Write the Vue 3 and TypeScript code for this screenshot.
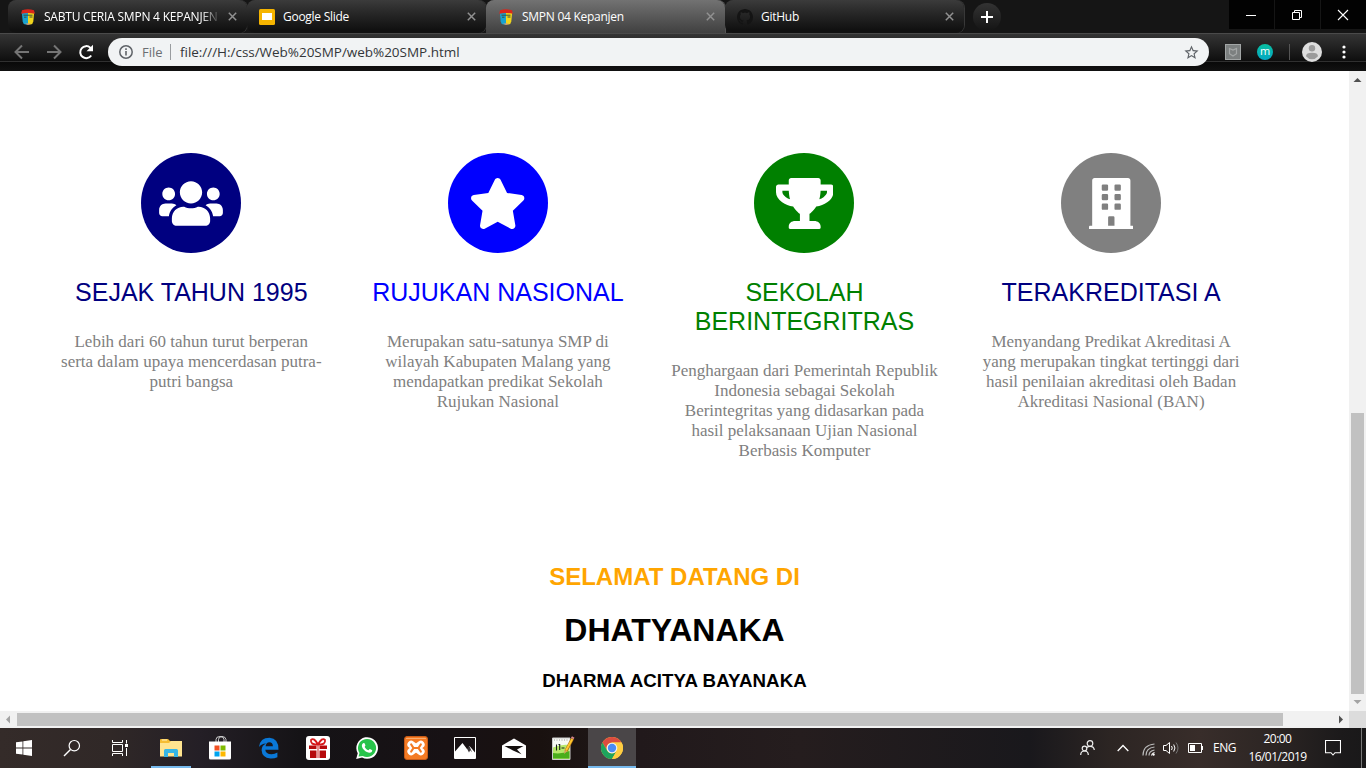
<script setup lang="ts">
interface Tab {
  title: string
  icon: 'school' | 'slides' | 'github'
  active?: boolean
  fade?: boolean
}

interface Feature {
  key: string
  title: string[]
  lines: string[]
  viewBox: string
  width: number
  path: string
}

const tabs: Tab[] = [
  { title: 'SABTU CERIA SMPN 4 KEPANJEN', icon: 'school', fade: true },
  { title: 'Google Slide', icon: 'slides' },
  { title: 'SMPN 04 Kepanjen', icon: 'school', active: true },
  { title: 'GitHub', icon: 'github' },
]

const features: Feature[] = [
  {
    key: 'navy',
    title: ['SEJAK TAHUN 1995'],
    lines: ['Lebih dari 60 tahun turut berperan', 'serta dalam upaya mencerdasan putra-', 'putri bangsa'],
    viewBox: '0 0 640 512',
    width: 64,
    path: 'M96 224c35.3 0 64-28.7 64-64s-28.7-64-64-64-64 28.7-64 64 28.7 64 64 64zm448 0c35.3 0 64-28.7 64-64s-28.7-64-64-64-64 28.7-64 64 28.7 64 64 64zm32 32h-64c-17.6 0-33.5 7.1-45.1 18.6 40.3 22.1 68.9 62 75.1 109.4h66c17.7 0 32-14.3 32-32v-32c0-35.3-28.7-64-64-64zm-256 0c61.9 0 112-50.1 112-112S381.9 32 320 32 208 82.1 208 144s50.1 112 112 112zm76.8 32h-8.3c-20.8 10-43.9 16-68.5 16s-47.6-6-68.5-16h-8.3C179.6 288 128 339.6 128 403.2V432c0 26.5 21.5 48 48 48h288c26.5 0 48-21.5 48-48v-28.8c0-63.6-51.6-115.2-115.2-115.2zm-223.7-13.4C161.5 263.1 145.6 256 128 256H64c-35.3 0-64 28.7-64 64v32c0 17.7 14.3 32 32 32h65.9c6.3-47.4 34.9-87.3 75.2-109.4z',
  },
  {
    key: 'blue',
    title: ['RUJUKAN NASIONAL'],
    lines: ['Merupakan satu-satunya SMP di', 'wilayah Kabupaten Malang yang', 'mendapatkan predikat Sekolah', 'Rujukan Nasional'],
    viewBox: '0 0 576 512',
    width: 57.4,
    path: 'M259.3 17.8L194 150.2 47.9 171.5c-26.2 3.8-36.7 36.1-17.7 54.6l105.7 103-25 145.5c-4.5 26.3 23.2 46 46.4 33.7L288 439.6l130.7 68.7c23.2 12.2 50.9-7.4 46.4-33.7l-25-145.5 105.7-103c19-18.5 8.5-50.8-17.7-54.6L382 150.2 316.7 17.8c-11.7-23.6-45.6-23.9-57.4 0z',
  },
  {
    key: 'green',
    title: ['SEKOLAH', 'BERINTEGRITRAS'],
    lines: ['Penghargaan dari Pemerintah Republik', 'Indonesia sebagai Sekolah', 'Berintegritas yang didasarkan pada', 'hasil pelaksanaan Ujian Nasional', 'Berbasis Komputer'],
    viewBox: '0 0 576 512',
    width: 57.4,
    path: 'M552 64H448V24c0-13.3-10.7-24-24-24H152c-13.3 0-24 10.7-24 24v40H24C10.7 64 0 74.7 0 88v56c0 35.7 22.5 72.4 61.9 100.7 31.5 22.7 69.8 37.1 110 41.7C203.3 338.5 240 360 240 360v72h-48c-35.3 0-64 20.7-64 56v12c0 6.6 5.4 12 12 12h296c6.6 0 12-5.4 12-12v-12c0-35.3-28.7-56-64-56h-48v-72s36.7-21.5 68.1-73.6c40.3-4.6 78.6-19 110-41.7 39.3-28.3 61.9-65 61.9-100.7V88c0-13.3-10.7-24-24-24zM99.3 192.8C74.9 175.2 64 155.6 64 144v-16h64.2c1 32.6 5.8 61.2 12.8 86.2-15.1-5.2-29.2-12.4-41.7-21.4zM512 144c0 16.1-17.7 36.1-35.3 48.8-12.5 9-26.7 16.2-41.8 21.4 7-25 11.8-53.6 12.8-86.2H512v16z',
  },
  {
    key: 'gray',
    title: ['TERAKREDITASI A'],
    lines: ['Menyandang Predikat Akreditasi A', 'yang merupakan tingkat tertinggi dari', 'hasil penilaian akreditasi oleh Badan', 'Akreditasi Nasional (BAN)'],
    viewBox: '0 0 448 512',
    width: 44.6,
    path: 'M436 480h-20V24c0-13.3-10.7-24-24-24H56C42.7 0 32 10.7 32 24v456H12c-6.600 0-12 5.400-12 12v20h448v-20c0-6.600-5.400-12-12-12zM140 64h40q12 0 12 12v40q0 12-12 12h-40q-12 0-12-12V76q0-12 12-12zM268 64h40q12 0 12 12v40q0 12-12 12h-40q-12 0-12-12V76q0-12 12-12zM140 160h40q12 0 12 12v40q0 12-12 12h-40q-12 0-12-12v-40q0-12 12-12zM268 160h40q12 0 12 12v40q0 12-12 12h-40q-12 0-12-12v-40q0-12 12-12zM140 256h40q12 0 12 12v40q0 12-12 12h-40q-12 0-12-12v-40q0-12 12-12zM268 256h40q12 0 12 12v40q0 12-12 12h-40q-12 0-12-12v-40q0-12 12-12zM204 384h40q12 0 12 12v84h-64v-84q0-12 12-12z',
  },
]
</script>

<template>
  <div class="screen">
    <header class="strip">
      <div class="tabs">
        <div v-for="tab in tabs" :key="tab.title" class="tab" :class="{ active: tab.active }">
          <svg v-if="tab.icon === 'school'" class="favicon" viewBox="0 0 16 16">
            <path d="M1.800 3H8v12.500H5.500Q3 15 2.700 12.500z" fill="#18a2cf" />
            <path d="M8 3h6.200l-.9 9.500Q13 15 10.500 15.500H8z" fill="#f0d51b" />
            <path d="M2 1.200Q8-.6 14 1.200l.8 3.600Q8 3 1.200 4.800z" fill="#d9271c" />
            <path d="M3.500 6.200h9M4 8.200h2.500M9.500 8h3" stroke="#3a5145" stroke-width="1" />
            <path d="M5 14.800Q8 13.500 11 14.800L8 16z" fill="#d59a78" />
          </svg>
          <svg v-else-if="tab.icon === 'slides'" class="favicon" viewBox="0 0 16 16">
            <rect width="16" height="16" rx="1.500" fill="#f5b400" />
            <rect x="3" y="4" width="10" height="7" fill="#fff" />
          </svg>
          <svg v-else class="favicon" viewBox="0 0 16 16">
            <path fill="#141414" fill-rule="evenodd" d="M8 0C3.580 0 0 3.580 0 8c0 3.540 2.290 6.530 5.470 7.590.4.070.55-.17.55-.38 0-.19-.01-.82-.01-1.490-2.010.37-2.530-.49-2.690-.94-.09-.23-.48-.94-.82-1.130-.28-.15-.68-.52-.01-.53.63-.01 1.080.58 1.230.82.72 1.210 1.870.87 2.330.66.07-.52.28-.87.51-1.070-1.780-.2-3.640-.89-3.640-3.950 0-.87.31-1.590.82-2.150-.08-.2-.36-1.020.08-2.120 0 0 .67-.21 2.200.82.64-.18 1.320-.27 2-.27s1.360.09 2 .27c1.530-1.040 2.200-.82 2.200-.82.44 1.100.16 1.920.08 2.120.51.56.82 1.270.82 2.150 0 3.070-1.870 3.750-3.650 3.950.29.25.54.73.54 1.480 0 1.070-.01 1.930-.01 2.200 0 .21.15.46.55.38A8.010 8.010 0 0 0 16 8c0-4.420-3.580-8-8-8z" />
          </svg>
          <span class="tab-title" :class="[tab.icon, { fade: tab.fade }]">{{ tab.title }}</span>
          <svg class="tab-close" viewBox="0 0 9 9"><path d="M.8.8l7.400 7.400M8.200.8L.8 8.200" stroke="#919191" stroke-width="1.500" /></svg>
        </div>
        <div class="new-tab">
          <svg width="12" height="12" viewBox="0 0 12 12"><path d="M6 0v12M0 6h12" stroke="#fff" stroke-width="2" /></svg>
        </div>
      </div>
      <div class="controls">
        <div class="control"><svg width="12" height="12" viewBox="0 0 12 12"><path d="M1 6.500h10" stroke="#fff" /></svg></div>
        <div class="control"><svg width="12" height="12" viewBox="0 0 12 12" fill="none" stroke="#fff"><path d="M1.500 3.500h7v7h-7zM3.500 3V1.500h7v7H9" /></svg></div>
        <div class="control"><svg width="12" height="12" viewBox="0 0 12 12"><path d="M1 1l10 10M11 1L1 11" stroke="#fff" stroke-width="1.100" /></svg></div>
      </div>
    </header>

    <div class="toolbar">
      <svg class="nav back" viewBox="0 0 16 16"><path d="M15 8H2M8 1.500L1.500 8 8 14.500" fill="none" stroke="#757575" stroke-width="2" /></svg>
      <svg class="nav forward" viewBox="0 0 16 16"><path d="M1 8h13M8 1.500L14.500 8 8 14.500" fill="none" stroke="#757575" stroke-width="2" /></svg>
      <svg class="nav reload" viewBox="0 0 16 16"><path d="M13.200 11.500A6 6 0 1 1 12.300 3.700L14 5.500" fill="none" stroke="#fff" stroke-width="2" /><path d="M15 .8v6.500H8.500z" fill="#fff" /></svg>
      <div class="omnibox">
        <svg class="info" viewBox="0 0 14 14"><circle cx="7" cy="7" r="6.200" fill="none" stroke="#5f6368" stroke-width="1.500" /><path d="M7 6v4.500M7 3.200v1.700" stroke="#5f6368" stroke-width="1.600" /></svg>
        <span class="scheme">File</span>
        <span class="url">file:///H:/css/Web%20SMP/web%20SMP.html</span>
        <svg class="bookmark" viewBox="0 0 24 24"><path fill="#5f6368" d="M22 9.240l-7.190-.62L12 2 9.190 8.630 2 9.240l5.460 4.730L5.820 21 12 17.270 18.180 21l-1.630-7.030L22 9.240zM12 15.400l-3.760 2.270 1-4.280-3.320-2.880 4.380-.38L12 6.100l1.710 4.040 4.380.38-3.320 2.880 1 4.280L12 15.400z" /></svg>
      </div>
      <svg class="shield" viewBox="0 0 16 16"><rect x=".5" y=".5" width="15" height="15" fill="#7c8080" stroke="#a2a6a6" /><path d="M4.500 4.500L8 6l3.500-1.500v5.200L8 12 4.500 9.700z" fill="none" stroke="#a4a7a7" stroke-width="1.200" /></svg>
      <div class="ext-m">m</div>
      <div class="tool-line"></div>
      <svg class="avatar" viewBox="0 0 20 20"><circle cx="10" cy="10" r="10" fill="#dedede" /><circle cx="10" cy="6.300" r="3.200" fill="#9b9b9b" /><path d="M4 14.200q0-3.400 6-3.400t6 3.400q-2.400 3-6 3t-6-3z" fill="#9b9b9b" /></svg>
      <svg class="kebab" viewBox="0 0 4 14"><circle cx="2" cy="2" r="1.600" fill="#fff" /><circle cx="2" cy="7" r="1.600" fill="#fff" /><circle cx="2" cy="12" r="1.600" fill="#fff" /></svg>
    </div>

    <div class="viewport">
      <main class="page">
        <section class="features">
          <article v-for="item in features" :key="item.key" class="feature" :class="item.key">
            <div class="disc">
              <svg :width="item.width" height="51" :viewBox="item.viewBox"><path fill="#fff" fill-rule="evenodd" :d="item.path" /></svg>
            </div>
            <h3 class="feature-title"><span v-for="t in item.title" :key="t">{{ t }}</span></h3>
            <p class="feature-text"><span v-for="l in item.lines" :key="l">{{ l }}</span></p>
          </article>
        </section>
        <section class="welcome">
          <h2>SELAMAT DATANG DI</h2>
          <h1>DHATYANAKA</h1>
          <h3>DHARMA ACITYA BAYANAKA</h3>
        </section>
      </main>
      <div class="vbar">
        <svg width="17" height="17" viewBox="0 0 17 17"><path d="M4.500 11L8.500 7l4 4z" fill="#505050" /></svg>
        <div class="vthumb"></div>
        <svg width="17" height="17" viewBox="0 0 17 17"><path d="M4.500 6h8l-4 4z" fill="#a3a3a3" /></svg>
      </div>
      <div class="hbar">
        <svg width="17" height="17" viewBox="0 0 17 17"><path d="M10 4.500v8l-4-4z" fill="#a3a3a3" /></svg>
        <div class="hthumb"></div>
        <svg width="17" height="17" viewBox="0 0 17 17"><path d="M7 4.500v8l4-4z" fill="#505050" /></svg>
      </div>
      <div class="corner"></div>
    </div>

    <footer class="taskbar">
      <div class="launch">
        <svg width="16" height="16" viewBox="0 0 16 16"><path fill="#fff" d="M0 2.300l6.500-.9v6.200H0zM7.300 1.300L16 0v7.600H7.300zM0 8.400h6.500v6.200L0 13.700zM7.300 8.400H16V16l-8.700-1.200z" /></svg>
      </div>
      <div class="launch">
        <svg width="18" height="18" viewBox="0 0 18 18" fill="none" stroke="#fff" stroke-width="1.200"><circle cx="11.300" cy="6.700" r="5.200" /><path d="M7.500 10.500L1 17" stroke-width="1.400" /></svg>
      </div>
      <div class="launch view">
        <svg width="18" height="18" viewBox="0 0 18 18" fill="none" stroke="#fff"><path d="M1.500 5.500h10v7h-10zM1.500 1v2.500h10V1M1.500 17v-2.500h10V17M15.500 1v3.500M15.500 9v8" /><path d="M14 5h3v3h-3z" fill="#fff" stroke="none" /></svg>
      </div>

      <div class="app open">
        <svg width="24" height="24" viewBox="0 0 24 24"><path d="M1 4q0-1 1-1h7l2 2h11v15H1z" fill="#f5bd33" /><path d="M1 7h9l2-2h11v15.500H1z" fill="#ffe48f" /><path d="M3 4h5" stroke="#fff3c4" /><path d="M5 21v-6.500Q5 13 6.500 13h11Q19 13 19 14.500V21h-4v-4H9v4z" fill="#36b5e5" /></svg>
      </div>
      <div class="app">
        <svg width="24" height="26" viewBox="0 0 24 26"><path d="M8 7V4.500q0-3 4-3t4 3V7M10.500 7V4.500q0-3 3.500-3t4 3V7" fill="none" stroke="#ddd" stroke-width=".9" /><path d="M1 6.500h22V23q0 1.500-1.500 1.500h-19Q1 24.500 1 23z" fill="#fff" /><path d="M6.500 10.500h5v5h-5z" fill="#f25022" /><path d="M12.500 10.500h5v5h-5z" fill="#7fba00" /><path d="M6.500 16.500h5v5h-5z" fill="#00a4ef" /><path d="M12.500 16.500h5v5h-5z" fill="#ffb900" /></svg>
      </div>
      <div class="app">
        <svg width="22" height="22" viewBox="0 0 22 22"><path d="M1 10Q2 .8 11.500 .8 20.700 1.500 20.500 12.800H7.300q.4 4.400 6.200 4.400 3.200 0 5.900-1.600v4.600q-3.200 1.500-7 1.300Q4 20.500 3.600 13.200 3.700 8.500 8 6.600 3.500 6.800 1 10zM7.600 9.200h7.300q-.1-3.800-3.600-3.900-3.100.1-3.700 3.900z" fill="#0a78d7" fill-rule="evenodd" /></svg>
      </div>
      <div class="app">
        <svg width="24" height="24" viewBox="0 0 24 24"><rect width="24" height="24" rx="3" fill="#fff" /><path d="M3 9.500h7.500V13H3zM13.500 9.500H21V13h-7.500zM4 14.500h6.500V22H4zM13.500 14.500H20V22h-6.500z" fill="#b60a0c" /><path d="M12 8.500Q4 9 5 4q3-3 7 4.500Q16 1 19 4q1 5-7 4.500zM10 8.500h4" fill="none" stroke="#d6181b" stroke-width="1.800" /><path d="M11.500 10h1v12h-1z" fill="#d52628" /></svg>
      </div>
      <div class="app">
        <svg width="22" height="22" viewBox="0 0 24 24"><path d="M.2 24l1.700-6.200A11.800 11.800 0 1 1 6.600 22.400z" fill="#fff" /><path d="M2.800 21.400l1-3.900A9.900 9.900 0 1 1 7.300 20.700z" fill="#27c34a" /><path d="M8.600 6.500c.4 0 .6 0 .8.500l.9 2.100c.2.500-.8 1.200-.8 1.700.8 1.700 2.200 2.900 4 3.600.6.100 1.100-1.500 1.700-1.300l2.100 1c.4.200.4.400.4.700-.1 1.600-1.400 2.400-2.900 2.400-3.600-.4-7.900-4-8.400-7.500-.1-1.500.9-3.200 2.200-3.200z" fill="#fff" /></svg>
      </div>
      <div class="app">
        <svg width="24" height="24" viewBox="0 0 24 24" fill="none" stroke-linecap="round"><rect x=".5" y=".5" width="23" height="23" rx="2.500" fill="#f47b24" stroke="#c85b17" /><path d="M2.500 2.500h19" stroke="#faad70" stroke-width="1.200" /><path d="M7.200 8.500l9.600 7M16.800 8.500l-9.600 7" stroke="#fff" stroke-width="7.600" /><path d="M7.200 8.500l2.300 3.500-2.300 3.500M16.800 8.500L14.500 12l2.300 3.500M9.500 12h5" stroke="#f47b24" stroke-width="2.200" stroke-linejoin="round" /></svg>
      </div>
      <div class="app">
        <svg width="22" height="22" viewBox="0 0 22 22"><path d="M.5.500h21v21H.5z" fill="none" stroke="#fff" /><path d="M1 14.500L8.500 6l4.500 6 2.500-3L21 15.500v6H1z" fill="#fff" /><path d="M12.500 10.800l2.500 4.700 1.200-2.300 1.800 2-2.500-6z" fill="#171214" opacity=".85" /></svg>
      </div>
      <div class="app">
        <svg width="24" height="20" viewBox="0 0 24 20"><path d="M0 7.500L12 .5l12 7V20H0z" fill="#fff" /><path d="M2.500 8h19L15 11.600l4.500 4.700L11 12.500z" fill="#15100f" /></svg>
      </div>
      <div class="app">
        <svg width="24" height="24" viewBox="0 0 24 24"><path d="M1.500 2H19v21.500H1.500z" fill="#f7f9f4" stroke="#ccc" /><path d="M2 11.500q8-3.500 16.500-2.500v14H2z" fill="#b7e86a" /><path d="M2 17q8 1.500 16.500-2v7.500H2z" fill="#4aae1c" /><path d="M3 4h14" stroke="#999" stroke-width="1" stroke-dasharray="1 1.500" /><path d="M5.500 8.500v6M7.500 8.500h1.200v5.500M10.500 12h3" fill="none" stroke="#18231a" stroke-width="1.100" /><path d="M21.500 2.500L15 15" stroke="#a96d15" stroke-width="3.200" /><path d="M21.300 3L15 14.500" stroke="#ffc62e" stroke-width="2" /><path d="M20.500 1l2.500 1.500" stroke="#d58791" stroke-width="2" /><path d="M13.700 14l-.7 4 3-2.500z" fill="#d6a15b" /></svg>
      </div>
      <div class="app focused open">
        <svg width="22" height="22" viewBox="0 0 22 22"><circle cx="11" cy="11" r="11" fill="#ffcd42" /><path d="M1.470 5.500A11 11 0 0 1 20.530 5.500H11A5.500 5.500 0 0 0 6.200 13.700z" fill="#dc4c3f" /><path d="M1.470 5.500A11 11 0 0 0 11 22l4.760-8.250A5.500 5.500 0 0 1 6.240 13.750z" fill="#1da45e" /><path d="M20.530 5.500H11l4.760 8.250L11 22A11 11 0 0 0 20.530 5.500z" fill="#ffcd42" /><circle cx="11" cy="11" r="5.300" fill="#f2f2f2" /><circle cx="11" cy="11" r="4.200" fill="#4c8bf5" /></svg>
      </div>

      <div class="tray">
        <svg class="people" width="15" height="16" viewBox="0 0 15 16" fill="none" stroke="#eee" stroke-width="1.200"><circle cx="10" cy="3.500" r="2.800" /><circle cx="4.500" cy="8.500" r="2.300" /><path d="M.7 15q0-4 3.800-4t3.800 4M7 7.500Q8 6.300 10 6.300q4 0 4.300 3.700" /></svg>
        <svg class="chevron" width="12" height="8" viewBox="0 0 12 8"><path d="M.7 7L6 1.500 11.300 7" fill="none" stroke="#fff" stroke-width="1.300" /></svg>
        <svg class="wifi" width="13" height="13" viewBox="0 0 13 13" fill="none" stroke="#bbb"><path d="M1 12.500Q1 2 12.500 1M4 12.500Q4 5 12.500 4M7 12.500Q7 8 12.500 7" stroke-width="1.200" /><path d="M9.500 12.500q0-2.500 3-3" stroke="#fff" /><circle cx="11.500" cy="11.500" r="1.200" fill="#fff" stroke="none" /></svg>
        <svg class="volume" width="17" height="14" viewBox="0 0 17 14" fill="none" stroke="#fff"><path d="M.5 4.500H3l3.500-3v11l-3.500-3H.5zM8.500 5q1.500 2 0 4M10.700 3.500q2.500 3.500 0 7" /><path d="M13 1.500q4 5.500 0 11" stroke="#777" /></svg>
        <svg class="battery" width="15" height="10" viewBox="0 0 15 10"><path d="M.5.500h13v9H.5z" fill="none" stroke="#fff" /><path d="M2 2h5v6H2zM14 3h1v4h-1z" fill="#fff" /></svg>
        <span class="lang">ENG</span>
        <div class="clock"><span class="time">20:00</span><span class="date">16/01/2019</span></div>
        <svg class="notice" width="16" height="17" viewBox="0 0 16 17"><path d="M.5.500h15v12.200H10L8 15l-2-2.300H.5z" fill="none" stroke="#fff" stroke-width="1.100" /></svg>
        <div class="desktop-edge"></div>
      </div>
    </footer>
  </div>
</template>

<style>
body {
  margin: 0;
  overflow: hidden;
}
</style>

<style scoped>
.screen {
  width: 1366px;
  height: 768px;
  display: flex;
  flex-direction: column;
  overflow: hidden;
  background: #fff;
  font-family: "Open Sans", "Noto Sans", sans-serif;
}
svg {
  display: block;
  flex: none;
}

/* tab strip */
.strip {
  height: 33px;
  flex: none;
  display: flex;
  justify-content: space-between;
  background: #151515;
}
.tabs {
  display: flex;
  padding-left: 8px;
}
.tab {
  width: 239px;
  height: 33px;
  box-sizing: border-box;
  padding: 0 10px 0 12px;
  display: flex;
  align-items: center;
  border-radius: 8px;
  background: linear-gradient(#3b3b3b, #272727 40%, #111 90%);
  box-shadow: 1px 0 0 #383838;
}
.tab.active {
  border-radius: 8px 8px 0 0;
  background: linear-gradient(#727272, #404040);
  box-shadow: 1px 0 0 #555;
}
.favicon {
  width: 16px;
  height: 16px;
}
.tab-title {
  margin-left: 8px;
  flex: 1;
  overflow: hidden;
  white-space: nowrap;
  font-size: 12px;
  line-height: 18px;
  letter-spacing: -0.27px;
  color: #fff;
}
.tab-title.fade {
  letter-spacing: -0.22px;
  -webkit-mask-image: linear-gradient(90deg, #000 157px, transparent 177px);
  mask-image: linear-gradient(90deg, #000 157px, transparent 177px);
}
.tab-close {
  width: 9px;
  height: 9px;
  margin-left: 7px;
}
.new-tab {
  width: 28px;
  height: 28px;
  margin: 3px 0 0 9px;
  border-radius: 50%;
  display: flex;
  align-items: center;
  justify-content: center;
  background: linear-gradient(#333, #141414);
}
.controls {
  display: flex;
  gap: 1px;
  height: 29px;
}
.control {
  width: 45px;
  box-sizing: border-box;
  padding-right: 2px;
  display: flex;
  align-items: center;
  justify-content: center;
  background: #020202;
}

/* toolbar */
.toolbar {
  height: 38px;
  flex: none;
  box-sizing: border-box;
  display: flex;
  align-items: center;
  border-top: 1px solid #4a4a4a;
  background: linear-gradient(#343434, #0e0e0e 27px, #303030 27px, #303030 28px, #090909 28px, #111 36px);
}
.nav {
  width: 16px;
  height: 16px;
}
.back { margin-left: 14px; }
.forward { margin-left: 16px; }
.reload { margin-left: 16px; }
.nav,
.shield,
.ext-m,
.tool-line,
.kebab {
  margin-top: -1px;
}
.omnibox {
  width: 1101px;
  height: 28px;
  margin-left: 14px;
  margin-top: -1px;
  border-radius: 14px;
  display: flex;
  align-items: center;
  background: #f1f3f4;
  font-size: 13px;
  line-height: 20px;
}
.info {
  width: 14px;
  height: 14px;
  margin-left: 11px;
}
.scheme {
  width: 28px;
  margin-left: 9px;
  color: #6b6e72;
  border-right: 1px solid #999c9f;
  line-height: 16px;
}
.url {
  margin-left: 9px;
  flex: 1;
  font-size: 13.500px;
  letter-spacing: -0.03px;
  color: #333639;
}
.bookmark {
  width: 17px;
  height: 17px;
  margin-right: 9px;
}
.shield {
  width: 16px;
  height: 16px;
  margin-left: 16px;
}
.ext-m {
  width: 16px;
  height: 16px;
  margin-left: 16px;
  border-radius: 50%;
  background: linear-gradient(#08bfa0, #05a7c4);
  color: #fff;
  font-size: 11px;
  line-height: 14px;
  text-align: center;
}
.tool-line {
  width: 1px;
  height: 16px;
  margin-left: 16px;
  background: #555;
}
.avatar {
  width: 20px;
  height: 20px;
  margin-left: 12px;
  margin-top: -1px;
}
.kebab {
  width: 4px;
  height: 14px;
  margin-left: 20px;
}

/* page */
.viewport {
  height: 657px;
  flex: none;
  display: grid;
  grid-template-columns: 1349px 17px;
  grid-template-rows: 640px 17px;
}
.page {
  overflow: hidden;
  background: #fff;
}
.features {
  height: 401px;
  padding: 82px 0 0 38px;
  display: grid;
  grid-template-columns: repeat(4, 306.600px);
}
.feature {
  display: flex;
  flex-direction: column;
  align-items: center;
  text-align: center;
}
.disc {
  width: 100px;
  height: 100px;
  border-radius: 50%;
  display: flex;
  align-items: center;
  justify-content: center;
}
.feature-title {
  margin: 25px 0 0;
  font: 400 25px/29px "Liberation Sans", Arial, sans-serif;
  white-space: nowrap;
}
.feature-title span,
.feature-text span {
  display: block;
}
.feature-text {
  margin: 25px 0 0;
  font: 17px/20px "Liberation Serif", "Times New Roman", serif;
  color: gray;
  white-space: nowrap;
}
.navy .disc { background: navy; }
.blue .disc { background: blue; }
.green .disc { background: green; }
.gray .disc { background: gray; }
.navy .feature-title,
.gray .feature-title { color: navy; }
.blue .feature-title { color: blue; }
.green .feature-title { color: green; }
.welcome {
  text-align: center;
  font-family: "Liberation Sans", Arial, sans-serif;
}
.welcome h2 {
  margin: 9px 0 0;
  font-size: 24px;
  line-height: 28px;
  color: orange;
}
.welcome h1 {
  margin: 21px 0 0;
  font-size: 32px;
  line-height: 36px;
}
.welcome h3 {
  margin: 22px 0 0;
  font-size: 18.720px;
  line-height: 22px;
  letter-spacing: 0.08px;
}

/* scrollbars */
.vbar {
  display: flex;
  flex-direction: column;
  justify-content: space-between;
  background: #f1f1f1;
}
.vthumb {
  width: 13px;
  height: 281px;
  margin: 325px 0 0 2px;
  background: #c1c1c1;
}
.hbar {
  display: flex;
  align-items: center;
  background: #f1f1f1;
}
.hthumb {
  width: 1266px;
  height: 13px;
  margin-right: 49px;
  background: #c1c1c1;
}
.corner {
  background: #dcdcdc;
}

/* taskbar */
.taskbar {
  height: 40px;
  flex: none;
  display: flex;
  background: linear-gradient(90deg, #342b29, #302827 110px, #241f26 200px, #151316 300px, #171114 450px, #19110f 540px, #21191b 640px, #251d1e 800px, #19181c 1030px, #2c2523 1110px, #382d2a 1200px, #2d2624 1270px, #1c1a1b 1340px, #191819);
}
.launch {
  width: 48px;
  display: flex;
  align-items: center;
  justify-content: center;
}
.view {
  width: 51px;
  box-sizing: border-box;
  padding-right: 4px;
}
.app {
  width: 48px;
  height: 40px;
  box-sizing: border-box;
  margin-right: 1px;
  display: flex;
  align-items: center;
  justify-content: center;
}
.app.open {
  background: linear-gradient(#76b9ed, #76b9ed) center bottom / 40px 2px no-repeat;
}
.app.focused {
  background: linear-gradient(#76b9ed, #76b9ed) center bottom / 48px 2px no-repeat, #4a4648;
}
.tray {
  margin-left: auto;
  display: flex;
  align-items: center;
  color: #fff;
}
.chevron { margin-left: 22px; }
.wifi { margin-left: 13px; margin-top: 2px; }
.volume { margin-left: 8px; }
.battery { margin-left: 8px; }
.lang {
  width: 24px;
  margin-left: 10px;
  margin-top: -1px;
  font-size: 12px;
  letter-spacing: -0.5px;
}
.clock {
  width: 59px;
  margin-left: 11px;
  display: flex;
  flex-direction: column;
  align-items: center;
  font-size: 12px;
  line-height: 18px;
  letter-spacing: -0.55px;
}
.notice { margin-left: 18px; }
.desktop-edge {
  width: 1px;
  height: 40px;
  margin: 0 4px 0 20px;
  background: #777;
}
</style>
